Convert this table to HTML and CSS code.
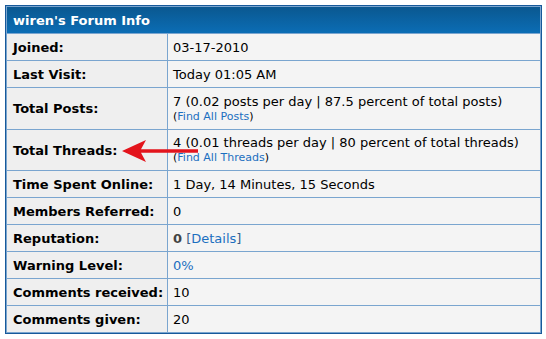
FILE: index.html
```html
<!DOCTYPE html>
<html>
<head>
<meta charset="utf-8">
<link rel="stylesheet" href="styles.css">
</head>
<body>
<div class="wrap">
<table class="tborder">
  <colgroup><col class="c-label"><col class="c-value"></colgroup>
  <thead>
    <tr><td class="thead" colspan="2">wiren's Forum Info</td></tr>
  </thead>
  <tbody>
    <tr><td class="label">Joined:</td><td class="value">03-17-2010</td></tr>
    <tr><td class="label">Last Visit:</td><td class="value">Today 01:05 AM</td></tr>
    <tr class="tall"><td class="label">Total Posts:</td><td class="value">
      <div class="line">7 (0.02 posts per day | 87.5 percent of total posts)</div>
      <div class="small">(<a href="#">Find All Posts</a>)</div>
    </td></tr>
    <tr class="tall2"><td class="label">Total Threads:</td><td class="value">
      <div class="line">4 (0.01 threads per day | 80 percent of total threads)</div>
      <div class="small">(<a href="#">Find All Threads</a>)</div>
    </td></tr>
    <tr><td class="label">Time Spent Online:</td><td class="value">1 Day, 14 Minutes, 15 Seconds</td></tr>
    <tr><td class="label">Members Referred:</td><td class="value">0</td></tr>
    <tr><td class="label">Reputation:</td><td class="value"><b class="rep">0</b> <span class="br">[</span><a href="#">Details</a><span class="br">]</span></td></tr>
    <tr><td class="label">Warning Level:</td><td class="value"><a href="#">0%</a></td></tr>
    <tr><td class="label">Comments received:</td><td class="value">10</td></tr>
    <tr><td class="label">Comments given:</td><td class="value">20</td></tr>
  </tbody>
</table>
<svg class="arrow" width="80" height="26" viewBox="0 0 80 26">
  <path d="M0 11 L24 0 L19 9.3 L76 9.3 L76 12.7 L19 12.7 L24 22 Z" fill="#e3141c"/>
</svg>
</div>
</body>
</html>
```
FILE: styles.css
```css
html, body {
  margin: 0;
  padding: 0;
  background: #ffffff;
}
body {
  padding: 5px;
  font-family: "DejaVu Sans", Verdana, sans-serif;
  font-size: 13px;
  color: #000;
}
.wrap {
  position: relative;
  width: 536px;
}
.tborder {
  width: 536px;
  table-layout: fixed;
  border-collapse: separate;
  border-spacing: 1px;
  background: #7aa5cf;
  border: 1px solid #17599a;
}
.c-label { width: 160px; }
.c-value { width: 372px; }
td {
  padding: 0 6px;
  height: 26px;
  vertical-align: middle;
  line-height: 15px;
  white-space: nowrap;
}
.thead {
  color: #fff;
  font-weight: bold;
  background: linear-gradient(#0a5890, #0b6db5);
}
.label {
  background: #efefef;
  font-weight: bold;
  color: #000;
}
.value {
  background: #f4f4f4;
  padding-left: 5px;
}
.tall td { height: 41px; }
.tall2 td { height: 40px; }
.line { line-height: 16px; }
.small {
  font-size: 11px;
  line-height: 14px;
}
a {
  color: #1b6fc0;
  text-decoration: none;
}
.rep { color: #444; }
.br { color: #3d5e86; }
.arrow {
  position: absolute;
  left: 117px;
  top: 135px;
}
```
